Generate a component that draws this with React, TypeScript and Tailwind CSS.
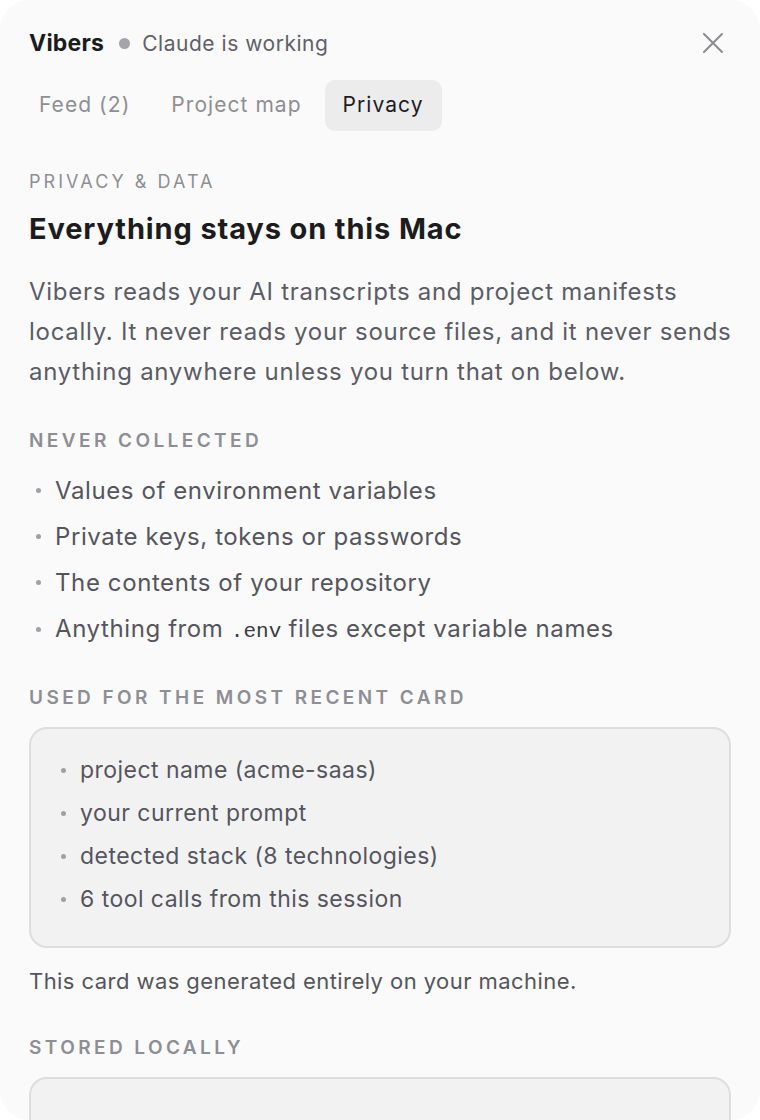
import React from 'react';

const neverCollected = [
    'Values of environment variables',
    'Private keys, tokens or passwords',
    'The contents of your repository',
];

const usedForCard = [
    'project name (acme-saas)',
    'your current prompt',
    'detected stack (8 technologies)',
    '6 tool calls from this session',
];

const SectionLabel: React.FC<{ children: React.ReactNode }> = ({ children }) => (
    <h3 className="text-[19px] font-semibold uppercase tracking-[0.18em] text-[#8e8e95] leading-none">
        {children}
    </h3>
);

const Bullet: React.FC<{ children: React.ReactNode }> = ({ children }) => (
    <li className="flex items-center gap-[14px]">
        <span className="w-[5px] h-[5px] rounded-full bg-[#a0a0a6] shrink-0" />
        <span>{children}</span>
    </li>
);

const App: React.FC = () => {
    return (
        <div className="w-[760px] h-[1120px] bg-white" style={{ fontFamily: 'Inter, "Noto Sans", sans-serif' }}>
            <div className="w-full h-full bg-[#fafafa] rounded-[30px] overflow-hidden px-[29px] pt-[26px]">
                {/* header */}
                <div className="flex items-center justify-between">
                    <div className="flex items-center">
                        <span className="text-[23px] font-bold text-[#1c1c1e] tracking-[0.01em]">Vibers</span>
                        <span className="ml-[15px] w-[11px] h-[11px] rounded-full bg-[#a4a4a9]" />
                        <span className="ml-[12px] text-[21px] tracking-[0.025em] text-[#606068]">Claude is working</span>
                    </div>
                    <button className="mr-[7px] text-[#8a8a90]">
                        <svg width="22" height="22" viewBox="0 0 22 22" fill="none" stroke="currentColor" strokeWidth="2" strokeLinecap="round">
                            <path d="M2 2L20 20M20 2L2 20" />
                        </svg>
                    </button>
                </div>

                {/* tabs */}
                <div className="flex items-center mt-[19px] -ml-[8px] gap-[5px]">
                    <div className="px-[18px] h-[51px] flex items-center text-[21px] tracking-[0.05em] text-[#8e8e95]">Feed (2)</div>
                    <div className="px-[18px] h-[51px] flex items-center text-[21px] tracking-[0.05em] text-[#8e8e95]">Project map</div>
                    <div className="px-[18px] h-[51px] flex items-center text-[21px] tracking-[0.05em] text-[#1c1c1e] bg-[#ececed] rounded-[10px]">Privacy</div>
                </div>

                {/* privacy content */}
                <div className="mt-[42px]">
                    <p className="text-[18px] uppercase tracking-[0.17em] text-[#8e8e95] leading-none">Privacy &amp; Data</p>
                    <h2 className="mt-[23px] text-[29px] font-bold text-[#1c1c1e] tracking-[0.03em] leading-none">
                        Everything stays on this Mac
                    </h2>
                    <p className="mt-[29px] -mr-[12px] text-[24px] tracking-[0.03em] leading-[40px] text-[#5c5c66]">
                        Vibers reads your AI transcripts and project manifests locally. It never reads your source files, and it never sends anything anywhere unless you turn that on below.
                    </p>

                    <div className="mt-[39px]">
                        <SectionLabel>Never collected</SectionLabel>
                    </div>
                    <ul className="mt-[26px] pl-[7px] flex flex-col gap-[17px] text-[24px] tracking-[0.025em] leading-[29px] text-[#55555e]">
                        {neverCollected.map(item => (
                            <Bullet key={item}>{item}</Bullet>
                        ))}
                        <Bullet>
                            Anything from <code className="font-['Liberation_Mono',monospace] text-[21px] tracking-normal text-[#3a3a40]">.env</code> files except variable names
                        </Bullet>
                    </ul>

                    <div className="mt-[42px]">
                        <SectionLabel>Used for the most recent card</SectionLabel>
                    </div>
                    <div className="mt-[20px] bg-[#f2f2f3] border-2 border-[#dedee0] rounded-[18px] px-[30px] pt-[28px] pb-[33px]">
                        <ul className="flex flex-col gap-[16px] text-[23px] tracking-[0.02em] leading-[27px] text-[#55555e]">
                            {usedForCard.map(item => (
                                <Bullet key={item}>{item}</Bullet>
                            ))}
                        </ul>
                    </div>
                    <p className="mt-[20px] text-[22px] tracking-[0.02em] leading-[26px] text-[#55555c]">
                        This card was generated entirely on your machine.
                    </p>

                    <div className="mt-[44px]">
                        <SectionLabel>Stored locally</SectionLabel>
                    </div>
                    <div className="mt-[20px] h-[200px] bg-[#f2f2f3] border-2 border-[#dedee0] rounded-[18px]" />
                </div>
            </div>
        </div>
    );
};

export default App;
